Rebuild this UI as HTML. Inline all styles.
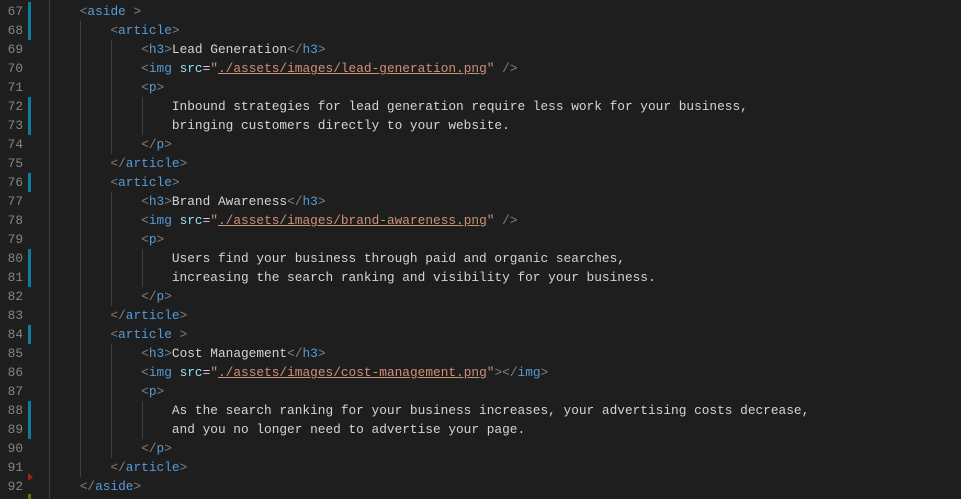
<!DOCTYPE html>
<html><head><meta charset="utf-8"><style>
body{margin:0;width:961px;height:499px;background:#1e1e1e;overflow:hidden;position:relative;font-family:"Liberation Mono",monospace;font-size:12.8px;}
.ln{position:absolute;left:0;width:23px;text-align:right;color:#858585;height:19px;line-height:19px}
.c{position:absolute;left:49px;white-space:pre;color:#d4d4d4;height:19px;line-height:19px}
.b{color:#808080}.t{color:#569cd6}.a{color:#9cdcfe}.s{color:#ce9178}.u{text-decoration:underline}
.g{position:absolute;width:1px;background:#404040}
.m{position:absolute;left:28px;width:3px;background:#0c7d9d}
</style></head><body>
<div class="g" style="left:49px;top:0;height:499px"></div>
<div class="g" style="left:80px;top:21px;height:456px"></div>
<div class="g" style="left:111px;top:40px;height:114px"></div>
<div class="g" style="left:111px;top:192px;height:114px"></div>
<div class="g" style="left:111px;top:344px;height:114px"></div>
<div class="g" style="left:142px;top:97px;height:38px"></div>
<div class="g" style="left:142px;top:249px;height:38px"></div>
<div class="g" style="left:142px;top:401px;height:38px"></div>
<div class="m" style="top:2px;height:38px"></div>
<div class="m" style="top:97px;height:38px"></div>
<div class="m" style="top:173px;height:19px"></div>
<div class="m" style="top:249px;height:38px"></div>
<div class="m" style="top:325px;height:19px"></div>
<div class="m" style="top:401px;height:38px"></div>
<div style="position:absolute;left:28px;top:473px;width:0;height:0;border-top:4px solid transparent;border-bottom:4px solid transparent;border-left:5px solid #a1260d"></div>
<div style="position:absolute;left:28px;top:494px;width:3px;height:5px;background:#587c0c"></div>
<div id="L"></div>
<script>
const B=s=>'<span class="b">'+s+'</span>',T=s=>'<span class="t">'+s+'</span>',A=s=>'<span class="a">'+s+'</span>';
const S=s=>'<span class="s">"<span class="u">'+s+'</span>"</span>';
const o=(t,x='')=>B('&lt;')+T(t)+x+B('&gt;'),c=t=>B('&lt;/')+T(t)+B('&gt;');
const img=p=>B('&lt;')+T('img')+' '+A('src')+'='+S(p);
const lines=[
'    '+B('&lt;')+T('aside')+' '+B('&gt;'),
'        '+o('article'),
'            '+o('h3')+'Lead Generation'+c('h3'),
'            '+img('./assets/images/lead-generation.png')+' '+B('/&gt;'),
'            '+o('p'),
'                Inbound strategies for lead generation require less work for your business,',
'                bringing customers directly to your website.',
'            '+c('p'),
'        '+c('article'),
'        '+o('article'),
'            '+o('h3')+'Brand Awareness'+c('h3'),
'            '+img('./assets/images/brand-awareness.png')+' '+B('/&gt;'),
'            '+o('p'),
'                Users find your business through paid and organic searches,',
'                increasing the search ranking and visibility for your business.',
'            '+c('p'),
'        '+c('article'),
'        '+B('&lt;')+T('article')+' '+B('&gt;'),
'            '+o('h3')+'Cost Management'+c('h3'),
'            '+img('./assets/images/cost-management.png')+B('&gt;&lt;/')+T('img')+B('&gt;'),
'            '+o('p'),
'                As the search ranking for your business increases, your advertising costs decrease,',
'                and you no longer need to advertise your page.',
'            '+c('p'),
'        '+c('article'),
'    '+c('aside')];
let h='';lines.forEach((l,i)=>{const y=2+i*19;h+='<div class="ln" style="top:'+y+'px">'+(67+i)+'</div><div class="c" style="top:'+y+'px">'+l+'</div>';});
document.getElementById('L').innerHTML=h;
</script>
</body></html>
